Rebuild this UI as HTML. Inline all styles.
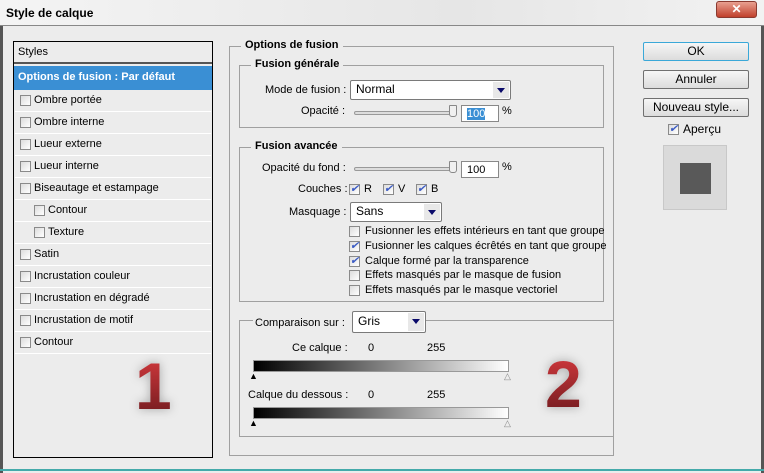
<!DOCTYPE html><html><head><meta charset="utf-8"><style>
*{box-sizing:border-box;margin:0;padding:0}
body{width:764px;height:473px;background:#ececec;font-family:"Liberation Sans",sans-serif;font-size:11px;color:#000;position:relative;overflow:hidden}
.a{position:absolute}
.title{left:0;top:0;width:764px;height:26px;background:linear-gradient(90deg,#f4f4f4,#e6e6e6 60%,#f2f2f2);border-bottom:1px solid #888}
.cb{width:11px;height:11px;border:1px solid #8a8a8a;background:linear-gradient(135deg,#ddd,#fff)}
.cb.on::after{content:"✔";position:absolute;left:0px;top:-3px;font-size:11px;color:#3b5bc4}
.row{left:1px;width:196px;height:22px;border-bottom:1px solid #fff}
.row span{position:absolute;top:4px}
.row .cb{position:absolute;top:5px}
.fs{border:1px solid #a0a0a0;border-right-color:#a0a0a0}
.lg{background:#ececec;font-weight:bold;font-size:11px;padding:0 4px}
.btn{width:106px;height:19px;border:1px solid #707070;border-radius:2px;background:linear-gradient(#f6f6f6,#dcdcdc);text-align:center;font-size:12px;line-height:17px}
.sel{background:#fff;border:1px solid #7a7a7a;border-radius:2px;font-size:12px;padding-left:5px;line-height:17px}
.sel i{position:absolute;right:1px;top:1px;width:16px;bottom:1px;background:#e8e8e8}
.sel i::after{content:"";position:absolute;left:4px;top:6px;border:4px solid transparent;border-top:5px solid #0a0a6a;border-bottom:0}
.slider{height:4px;border:1px solid #999;border-radius:2px;background:#ddd}
.thumb{width:8px;height:12px;background:#f0f0f0;border:1px solid #888;border-radius:1px 1px 3px 3px}
.inp{background:#fff;border:1px solid #888;width:38px;height:17px;font-size:11px;padding:2px 5px}
.num{font-family:"Liberation Sans",sans-serif;font-weight:bold;font-size:66px;line-height:66px;background:linear-gradient(#d63a3e,#6e1a1e);-webkit-background-clip:text;color:transparent;filter:drop-shadow(0 0 5px rgba(0,0,0,.3))}
.grad{height:12px;border:1px solid #999;background:linear-gradient(90deg,#000,#fff)}
</style></head><body>
<div class="a title"></div>
<div class="a" style="left:6px;top:6px;font-weight:bold;font-size:12px">Style de calque</div>
<div class="a" style="left:716px;top:1px;width:41px;height:17px;border-radius:3px;background:linear-gradient(#e8a090,#c0402c);border:1px solid #8a3a30;color:#fff;text-align:center;font-weight:bold;font-size:12px;line-height:15px">✕</div>
<div class="a" style="left:0;top:26px;width:3px;height:447px;background:#555"></div>
<div class="a" style="left:761px;top:26px;width:3px;height:447px;background:#555"></div>
<div class="a" style="left:0;top:469px;width:764px;height:2px;background:#4aa"></div>

<div class="a" style="left:13px;top:41px;width:200px;height:417px;border:1px solid #000;background:#ececec">
<div class="a" style="left:0;top:0;width:198px;height:22px;border-bottom:2px solid #555;background:#ececec"><span class="a" style="left:4px;top:4px">Styles</span></div>
<div class="a" style="left:0;top:24px;width:198px;height:24px;background:#3a8fd4;color:#fff;font-weight:bold;font-size:11px"><span class="a" style="left:4px;top:5px">Options de fusion : Par défaut</span></div>
<div class="a row" style="top:48px"><i class="cb a" style="left:5px"></i><span style="left:19px">Ombre portée</span></div>
<div class="a row" style="top:70px"><i class="cb a" style="left:5px"></i><span style="left:19px">Ombre interne</span></div>
<div class="a row" style="top:92px"><i class="cb a" style="left:5px"></i><span style="left:19px">Lueur externe</span></div>
<div class="a row" style="top:114px"><i class="cb a" style="left:5px"></i><span style="left:19px">Lueur interne</span></div>
<div class="a row" style="top:136px"><i class="cb a" style="left:5px"></i><span style="left:19px">Biseautage et estampage</span></div>
<div class="a row" style="top:158px"><i class="cb a" style="left:19px"></i><span style="left:33px">Contour</span></div>
<div class="a row" style="top:180px"><i class="cb a" style="left:19px"></i><span style="left:33px">Texture</span></div>
<div class="a row" style="top:202px"><i class="cb a" style="left:5px"></i><span style="left:19px">Satin</span></div>
<div class="a row" style="top:224px"><i class="cb a" style="left:5px"></i><span style="left:19px">Incrustation couleur</span></div>
<div class="a row" style="top:246px"><i class="cb a" style="left:5px"></i><span style="left:19px">Incrustation en dégradé</span></div>
<div class="a row" style="top:268px"><i class="cb a" style="left:5px"></i><span style="left:19px">Incrustation de motif</span></div>
<div class="a row" style="top:290px"><i class="cb a" style="left:5px"></i><span style="left:19px">Contour</span></div>
</div>
<div class="a num" style="left:135px;top:353px">1</div>

<div class="a fs" style="left:229px;top:46px;width:385px;height:410px"></div>
<div class="a lg" style="left:241px;top:39px">Options de fusion</div>
<div class="a fs" style="left:239px;top:65px;width:365px;height:63px"></div>
<div class="a lg" style="left:251px;top:58px">Fusion générale</div>
<div class="a" style="left:265px;top:84px">Mode de fusion :</div>
<div class="a sel" style="left:350px;top:80px;width:161px;height:20px">Normal<i></i></div>
<div class="a" style="left:301px;top:105px">Opacité :</div>
<div class="a slider" style="left:354px;top:111px;width:100px"></div>
<div class="a thumb" style="left:449px;top:105px"></div>
<div class="a inp" style="left:461px;top:105px"><span style="background:#3a8fd4;color:#fff">100</span></div>
<div class="a" style="left:502px;top:105px">%</div>

<div class="a fs" style="left:239px;top:147px;width:365px;height:155px"></div>
<div class="a lg" style="left:251px;top:140px">Fusion avancée</div>
<div class="a" style="left:262px;top:162px">Opacité du fond :</div>
<div class="a slider" style="left:354px;top:167px;width:100px"></div>
<div class="a thumb" style="left:449px;top:161px"></div>
<div class="a inp" style="left:461px;top:161px">100</div>
<div class="a" style="left:502px;top:161px">%</div>
<div class="a" style="left:298px;top:183px">Couches :</div>
<i class="a cb on" style="left:349px;top:184px"></i><span class="a" style="left:364px;top:183px">R</span>
<i class="a cb on" style="left:383px;top:184px"></i><span class="a" style="left:398px;top:183px">V</span>
<i class="a cb on" style="left:416px;top:184px"></i><span class="a" style="left:431px;top:183px">B</span>
<div class="a" style="left:289px;top:206px">Masquage :</div>
<div class="a sel" style="left:350px;top:202px;width:92px;height:20px">Sans<i></i></div>
<i class="a cb" style="left:349px;top:226px"></i><span class="a" style="left:365px;top:225px">Fusionner les effets intérieurs en tant que groupe</span>
<i class="a cb on" style="left:349px;top:241px"></i><span class="a" style="left:365px;top:240px">Fusionner les calques écrêtés en tant que groupe</span>
<i class="a cb on" style="left:349px;top:256px"></i><span class="a" style="left:365px;top:255px">Calque formé par la transparence</span>
<i class="a cb" style="left:349px;top:270px"></i><span class="a" style="left:365px;top:269px">Effets masqués par le masque de fusion</span>
<i class="a cb" style="left:349px;top:285px"></i><span class="a" style="left:365px;top:284px">Effets masqués par le masque vectoriel</span>

<div class="a fs" style="left:239px;top:320px;width:375px;height:117px;border-right:none"></div>
<div class="a" style="left:253px;top:313px;width:100px;height:14px;background:#ececec"></div>
<div class="a" style="left:255px;top:317px">Comparaison sur :</div>
<div class="a sel" style="left:352px;top:311px;width:74px;height:22px;line-height:19px;background:#fff">Gris<i></i></div>
<div class="a" style="left:292px;top:342px">Ce calque :</div>
<div class="a" style="left:368px;top:342px">0</div>
<div class="a" style="left:427px;top:342px">255</div>
<div class="a grad" style="left:253px;top:360px;width:256px"></div>
<div class="a" style="left:249px;top:371px;font-size:9px">▲</div>
<div class="a" style="left:504px;top:371px;font-size:9px;color:#888">△</div>
<div class="a" style="left:248px;top:389px">Calque du dessous :</div>
<div class="a" style="left:368px;top:389px">0</div>
<div class="a" style="left:427px;top:389px">255</div>
<div class="a grad" style="left:253px;top:407px;width:256px"></div>
<div class="a" style="left:249px;top:418px;font-size:9px">▲</div>
<div class="a" style="left:504px;top:418px;font-size:9px;color:#888">△</div>
<div class="a num" style="left:545px;top:351px">2</div>

<div class="a btn" style="left:643px;top:42px;border-color:#3aa8d8">OK</div>
<div class="a btn" style="left:643px;top:70px">Annuler</div>
<div class="a btn" style="left:643px;top:98px">Nouveau style...</div>
<i class="a cb on" style="left:668px;top:124px"></i><span class="a" style="left:683px;top:122px;font-size:12px">Aperçu</span>
<div class="a" style="left:663px;top:145px;width:64px;height:65px;background:#dadada;border:1px solid #c8c8c8"></div>
<div class="a" style="left:680px;top:163px;width:31px;height:31px;background:#595959"></div>
</body></html>
